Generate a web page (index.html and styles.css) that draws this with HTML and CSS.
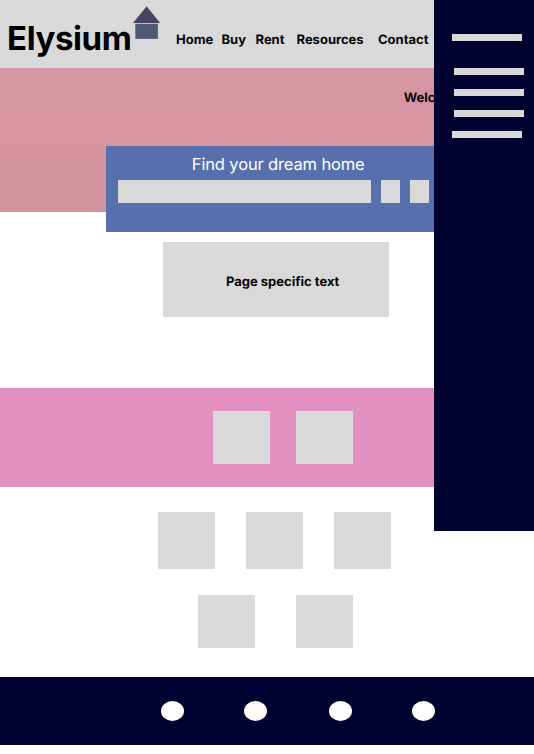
FILE: index.html
```html
<!DOCTYPE html>
<html lang="en">
<head>
<meta charset="utf-8">
<title>Elysium</title>
<link rel="stylesheet" href="styles.css">
</head>
<body>
<div class="page">
  <header class="header">
    <div class="brand">Elysium</div>
    <svg class="house" viewBox="0 0 28 34" width="28" height="34" aria-hidden="true">
      <path d="M14.6 0.3 L28.2 17 H1 Z" fill="#4a4463"/>
      <rect x="3.3" y="17.8" width="22.6" height="15.1" fill="#525977"/>
    </svg>
    <nav class="nav">
      <a class="home">Home</a>
      <a class="buy">Buy</a>
      <a class="rent">Rent</a>
      <a class="resources">Resources</a>
      <a class="contact">Contact</a>
    </nav>
  </header>
  <section class="hero">
    <p class="welcome">Welcome</p>
    <div class="search">
      <h1 class="search-title">Find your dream home</h1>
      <div class="search-row">
        <div class="field"></div>
        <div class="option"></div>
        <div class="option"></div>
      </div>
    </div>
  </section>
  <section class="intro">Page specific text</section>
  <section class="featured">
    <div class="tile"></div>
    <div class="tile"></div>
  </section>
  <section class="gallery">
    <div class="row row-three">
      <div class="tile"></div>
      <div class="tile"></div>
      <div class="tile"></div>
    </div>
    <div class="row row-two">
      <div class="tile"></div>
      <div class="tile"></div>
    </div>
  </section>
  <footer class="footer">
    <span class="dot"></span>
    <span class="dot warm"></span>
    <span class="dot"></span>
    <span class="dot"></span>
  </footer>
  <aside class="drawer">
    <div class="bar lead"></div>
    <div class="bar"></div>
    <div class="bar"></div>
    <div class="bar"></div>
    <div class="bar last"></div>
  </aside>
</div>
</body>
</html>
```
FILE: styles.css
```css
* { box-sizing: border-box; }

body {
  margin: 0;
  background: #fff;
  color: #070709;
  font-family: Inter, sans-serif;
  text-rendering: geometricPrecision;
}

.page {
  position: relative;
  display: flex;
  flex-direction: column;
  width: 534px;
  height: 754px;
  overflow: hidden;
}

.header {
  display: flex;
  align-items: flex-start;
  height: 68px;
  background: #d9d9d9;
}

.brand {
  width: 125px;
  margin: 18px 0 0 7px;
  color: #000;
  font-size: 33px;
  font-weight: 700;
  letter-spacing: -0.4px;
  line-height: 40px;
}

.house {
  flex: none;
  margin-top: 6px;
}

.nav {
  display: flex;
  margin: 32px 0 0 16px;
  font-size: 13px;
  font-weight: 700;
  line-height: 16px;
}

.home { width: 45.5px; }
.buy { width: 34px; }
.rent { width: 41px; }
.resources { width: 81.5px; }

.hero {
  display: flex;
  flex-direction: column;
  height: 144px;
  background: linear-gradient(#d695a2, #d4949f);
}

.welcome {
  margin: 22px 0 0 403.7px;
  font-size: 13px;
  font-weight: 700;
  line-height: 16px;
}

.search {
  flex: none;
  height: 86px;
  margin: 40px 0 0 106px;
  padding: 8px 0 0 11.5px;
  background: #586fad;
}

.search-title {
  margin: 0 0 5px 74.3px;
  color: #fff;
  font-size: 16.5px;
  font-weight: 400;
  letter-spacing: -0.14px;
  line-height: 21px;
}

.search-row {
  display: flex;
  gap: 9.5px;
}

.field,
.option {
  width: 19.5px;
  height: 23px;
  background: #d9d9d9;
}

.field { width: 253.5px; }

.intro {
  width: 226px;
  height: 75px;
  margin: 30px 0 0 163px;
  padding: 32px 0 0 63px;
  background: #d9d9d9;
  font-size: 13px;
  font-weight: 700;
  line-height: 16px;
}

.featured {
  display: flex;
  gap: 26px;
  height: 99px;
  margin-top: 71px;
  padding: 23px 0 0 213px;
  background: #e290c0;
}

.tile {
  width: 57px;
  height: 57px;
  background: #d9d9d9;
}

.featured .tile { height: 53px; }

.gallery {
  display: flex;
  flex-direction: column;
  gap: 26px;
  height: 190px;
  padding-top: 25px;
}

.row { display: flex; }
.row-three { gap: 31px; margin-left: 158px; }
.row-two { gap: 41px; margin-left: 198.4px; }
.row-two .tile { height: 53px; }

.footer {
  display: flex;
  gap: 60px;
  height: 68px;
  padding: 24px 0 0 161px;
  background: #000330;
}

.dot {
  width: 23px;
  height: 20px;
  border-radius: 50%;
  background: #fff;
}

.warm {
  margin-right: 1.6px;
  background: #fff9f9;
}

.drawer {
  position: absolute;
  top: 0;
  right: 0;
  display: flex;
  flex-direction: column;
  gap: 14px;
  width: 100px;
  height: 531px;
  padding: 34px 0 0 20px;
  background: #000330;
}

.bar {
  width: 70px;
  height: 7px;
  background: #d9d9d9;
}

.lead { margin: 0 0 13px -2px; }
.last { margin-left: -2px; }
```
